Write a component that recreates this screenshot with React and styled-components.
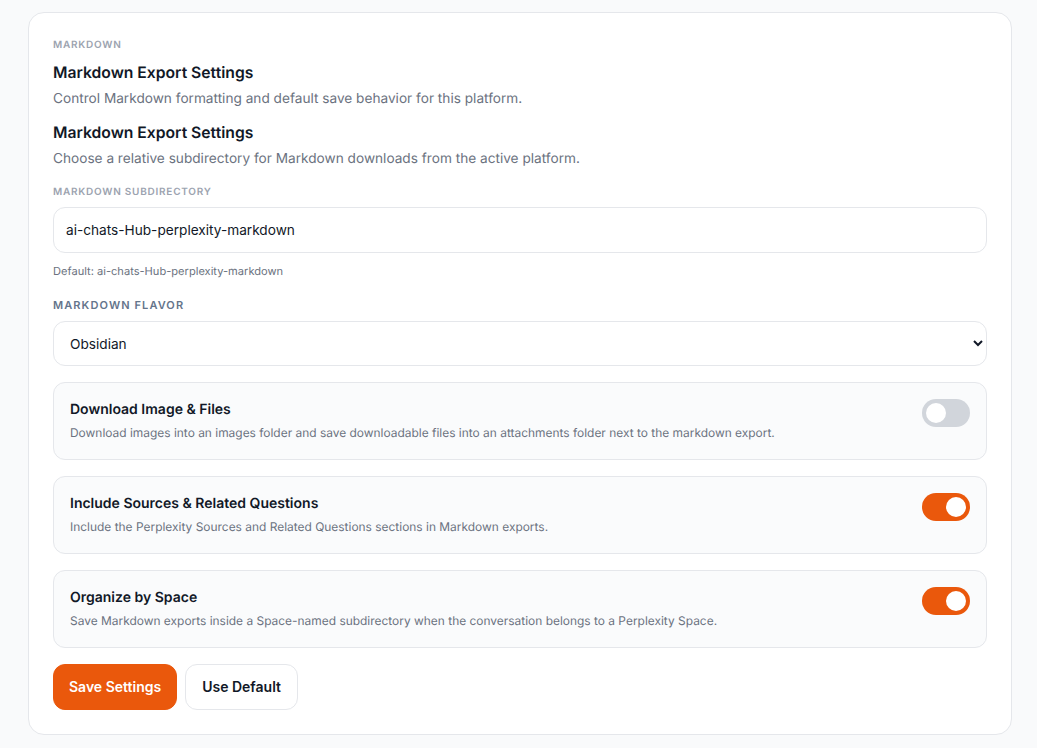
import React from "react";
import styled, { createGlobalStyle } from "styled-components";

const Global = createGlobalStyle`
  html, body { margin: 0; padding: 0; background: #f9fafb; }
  body { font-family: Inter, "Liberation Sans", sans-serif; color: #111827; -webkit-font-smoothing: antialiased; text-rendering: geometricPrecision; }
`;

const Page = styled.div`
  width: 1037px;
  height: 748px;
  box-sizing: border-box;
  padding: 12px 25px 0 28px;
  overflow: hidden;
`;

const Card = styled.section`
  box-sizing: border-box;
  height: 723px;
  background: #fff;
  border: 1px solid #e5e7eb;
  border-radius: 16px;
  padding: 24px;
`;

const Eyebrow = styled.div`
  font-size: 10px;
  line-height: 14px;
  height: 14px;
  margin-top: 1px;
  font-weight: 600;
  letter-spacing: 0.75px;
  text-transform: uppercase;
  color: #9ca3af;
`;

const Title = styled.h2`
  margin: ${(p) => p.$top}px 0 0;
  font-size: 15.7px;
  line-height: 24px;
  font-weight: 600;
  color: #111827;
`;

const Desc = styled.p`
  margin: 4px 0 0;
  font-size: 13.65px;
  line-height: 20px;
  color: #6b7280;
`;

const FieldLabel = styled.label`
  display: block;
  margin-top: ${(p) => p.$top}px;
  font-size: ${(p) => (p.$strong ? 11 : 10)}px;
  line-height: 14px;
  font-weight: 600;
  letter-spacing: ${(p) => (p.$strong ? 1.1 : 0.75)}px;
  text-transform: uppercase;
  color: ${(p) => (p.$strong ? "#64748b" : "#9ca3af")};
`;

const TextInput = styled.input`
  display: block;
  box-sizing: border-box;
  width: 100%;
  height: 46px;
  margin-top: 8px;
  padding: 0 12px;
  background: #fff;
  border: 1px solid #e5e7eb;
  border-radius: 12px;
  font: 400 13.65px Inter, sans-serif;
  color: #111827;
  outline: none;
`;

const Hint = styled.div`
  margin-top: 11px;
  font-size: 11.1px;
  line-height: 14px;
  color: #6b7280;
`;

const Select = styled.select`
  display: block;
  box-sizing: border-box;
  width: 100%;
  height: 45px;
  margin-top: 9px;
  padding: 0 12px;
  background: #fff;
  border: 1px solid #e5e7eb;
  border-radius: 12px;
  font: 400 13.65px Inter, sans-serif;
  color: #111827;
  outline: none;
`;

const Rows = styled.div`
  display: flex;
  flex-direction: column;
  gap: 16px;
  margin-top: 16px;
`;

const Row = styled.div`
  box-sizing: border-box;
  height: 78px;
  display: flex;
  justify-content: space-between;
  align-items: flex-start;
  padding: 16px;
  background: #fafbfc;
  border: 1px solid #e5e7eb;
  border-radius: 12px;
`;

const RowText = styled.div`
  padding-top: 1px;
`;

const RowTitle = styled.div`
  font-size: 14px;
  line-height: 20px;
  font-weight: 600;
  color: #111827;
`;

const RowDesc = styled.div`
  margin-top: 5px;
  font-size: 11.95px;
  line-height: 16px;
  color: #6b7280;
`;

const Toggle = styled.span`
  flex: none;
  position: relative;
  width: 48px;
  height: 28px;
  border-radius: 14px;
  background: ${(p) => (p.$on ? "#ea580c" : "#d1d5db")};
  &::after {
    content: "";
    position: absolute;
    top: 4px;
    left: ${(p) => (p.$on ? 24 : 4)}px;
    width: 20px;
    height: 20px;
    border-radius: 50%;
    background: #fff;
  }
`;

const Actions = styled.div`
  display: flex;
  gap: 8px;
  margin-top: 16px;
`;

const Button = styled.button`
  box-sizing: border-box;
  height: 46px;
  padding: 0 ${(p) => (p.$primary ? 15 : 16)}px 1px;
  border-radius: 12px;
  border: 1px solid ${(p) => (p.$primary ? "#ea580c" : "#e5e7eb")};
  background: ${(p) => (p.$primary ? "#ea580c" : "#fff")};
  color: ${(p) => (p.$primary ? "#fff" : "#111827")};
  font: 600 14px Inter, sans-serif;
`;

const rows = [
  ["Download Image & Files", "Download images into an images folder and save downloadable files into an attachments folder next to the markdown export.", false],
  ["Include Sources & Related Questions", "Include the Perplexity Sources and Related Questions sections in Markdown exports.", true],
  ["Organize by Space", "Save Markdown exports inside a Space-named subdirectory when the conversation belongs to a Perplexity Space.", true],
];

export default function App() {
  return (
    <Page>
      <Global />
      <Card>
        <Eyebrow>Markdown</Eyebrow>
        <Title $top={9}>Markdown Export Settings</Title>
        <Desc>Control Markdown formatting and default save behavior for this platform.</Desc>
        <Title $top={12}>Markdown Export Settings</Title>
        <Desc>Choose a relative subdirectory for Markdown downloads from the active platform.</Desc>
        <FieldLabel $top={16}>Markdown Subdirectory</FieldLabel>
        <TextInput readOnly value="ai-chats-Hub-perplexity-markdown" />
        <Hint>Default: ai-chats-Hub-perplexity-markdown</Hint>
        <FieldLabel $top={20} $strong>Markdown Flavor</FieldLabel>
        <Select defaultValue="Obsidian">
          <option>Obsidian</option>
          <option>CommonMark</option>
        </Select>
        <Rows>
          {rows.map(([t, d, on]) => (
            <Row key={t}>
              <RowText>
                <RowTitle>{t}</RowTitle>
                <RowDesc>{d}</RowDesc>
              </RowText>
              <Toggle $on={on} />
            </Row>
          ))}
        </Rows>
        <Actions>
          <Button $primary>Save Settings</Button>
          <Button>Use Default</Button>
        </Actions>
      </Card>
    </Page>
  );
}
